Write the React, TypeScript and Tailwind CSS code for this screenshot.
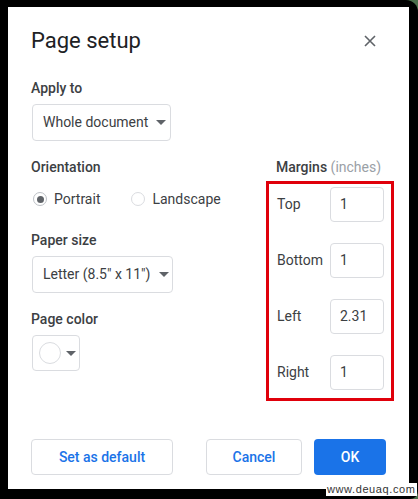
import React from "react";

const Arrow = () => (
  <svg width="10" height="5" viewBox="0 0 10 5" className="shrink-0">
    <path d="M0 0 L10 0 L5 5 Z" fill="#5f6368" />
  </svg>
);

const MarginRow = ({ label, value }: { label: string; value: string }) => (
  <div className="flex items-center">
    <div className="w-[53px] text-[14px] text-[#3c4043]">{label}</div>
    <div className="w-[54px] h-[35px] border border-[#dadce0] rounded-[4px] flex items-center pl-[9px] text-[14px] text-[#3c4043]">
      {value}
    </div>
  </div>
);

export default function App() {
  return (
    <div
      className="relative w-[418px] h-[499px] bg-[#4b6e4b] overflow-hidden"
      style={{ fontFamily: "Roboto, 'Noto Sans', Arial, sans-serif" }}
    >
      <div className="w-[418px] h-[499px] bg-black rounded-tr-[12px] rounded-br-[8px] pl-[8px] pt-[7px] pr-[9px] pb-[10px]">
        <div className="w-full h-full bg-white flex flex-col pl-[23px] pr-[23px] pt-[20px]">
          {/* Title */}
          <div className="flex items-center justify-between h-[28px]">
            <div className="text-[22px] leading-[28px] text-[#202124]">Page setup</div>
            <svg width="14" height="14" viewBox="0 0 14 14" className="mr-[9px]">
              <path d="M2 2 L12 12 M12 2 L2 12" stroke="#5f6368" strokeWidth="1.6" />
            </svg>
          </div>

          {/* Apply to */}
          <div className="mt-[23px] text-[14px] leading-[20px] font-medium text-[#3c4043]">Apply to</div>
          <div className="mt-[6px] w-[139px] h-[37px] border border-[#dadce0] rounded-[4px] flex items-center pl-[10px] ml-[1px]">
            <span className="text-[14px] text-[#3c4043] whitespace-nowrap">Whole document</span>
            <div className="ml-[8px]">
              <Arrow />
            </div>
          </div>

          <div className="flex mt-[16px]">
            {/* Left column */}
            <div className="w-[235px] shrink-0 flex flex-col">
              <div className="text-[14px] leading-[20px] font-medium text-[#3c4043]">Orientation</div>
              <div className="mt-[12px] h-[20px] flex items-center ml-[2px]">
                <div className="w-[14px] h-[14px] rounded-full border border-[#bdc1c6] flex items-center justify-center">
                  <div className="w-[7px] h-[7px] rounded-full bg-[#5f6368]" />
                </div>
                <span className="ml-[7px] text-[14px] text-[#3c4043]">Portrait</span>
                <div className="ml-[31px] w-[14px] h-[14px] rounded-full border border-[#dadce0]" />
                <span className="ml-[7px] text-[14px] text-[#3c4043]">Landscape</span>
              </div>
              <div className="mt-[21px] text-[14px] leading-[20px] font-medium text-[#3c4043]">Paper size</div>
              <div className="mt-[6px] w-[141px] h-[37px] border border-[#dadce0] rounded-[4px] flex items-center pl-[10px] ml-[1px]">
                <span className="text-[14px] text-[#3c4043] whitespace-nowrap">Letter (8.5" x 11")</span>
                <div className="ml-[9px]">
                  <Arrow />
                </div>
              </div>
              <div className="mt-[16px] text-[14px] leading-[20px] font-medium text-[#3c4043]">Page color</div>
              <div className="mt-[6px] w-[48px] h-[36px] border border-[#dadce0] rounded-[4px] flex items-center pl-[6px] ml-[1px]">
                <div className="w-[22px] h-[22px] rounded-full border border-[#dadce0] bg-white" />
                <div className="ml-[5px]">
                  <Arrow />
                </div>
              </div>
            </div>

            {/* Right column */}
            <div className="flex flex-col shrink-0">
              <div className="ml-[10px] text-[14px] leading-[20px] whitespace-nowrap">
                <span className="font-medium text-[#3c4043]">Margins</span>{" "}
                <span className="text-[#9aa0a6]">(inches)</span>
              </div>
              <div className="mt-[4px] w-[128px] border-[3px] border-[#e0000b] pl-[8px] pt-[3px] pb-[8px] flex flex-col gap-[21px]">
                <MarginRow label="Top" value="1" />
                <MarginRow label="Bottom" value="1" />
                <MarginRow label="Left" value="2.31" />
                <MarginRow label="Right" value="1" />
              </div>
            </div>
          </div>

          {/* Buttons */}
          <div className="mt-[38px] flex items-center">
            <div className="w-[142px] h-[36px] border border-[#dadce0] rounded-[4px] flex items-center justify-center text-[14px] font-medium text-[#1a73e8]">
              Set as default
            </div>
            <div className="ml-auto w-[96px] h-[36px] border border-[#dadce0] rounded-[4px] flex items-center justify-center text-[14px] font-medium text-[#1a73e8]">
              Cancel
            </div>
            <div className="ml-[12px] w-[72px] h-[36px] bg-[#1a73e8] rounded-[4px] flex items-center justify-center text-[14px] font-medium text-white">
              OK
            </div>
          </div>
        </div>
      </div>
      <div
        className="absolute left-[326px] top-[483px] px-[1px] bg-white text-[11px] leading-[13px] text-[#333] tracking-[0.6px] whitespace-nowrap"
        style={{ fontFamily: "'Liberation Sans', Arial, sans-serif" }}
      >
        www.deuaq.com
      </div>
    </div>
  );
}
